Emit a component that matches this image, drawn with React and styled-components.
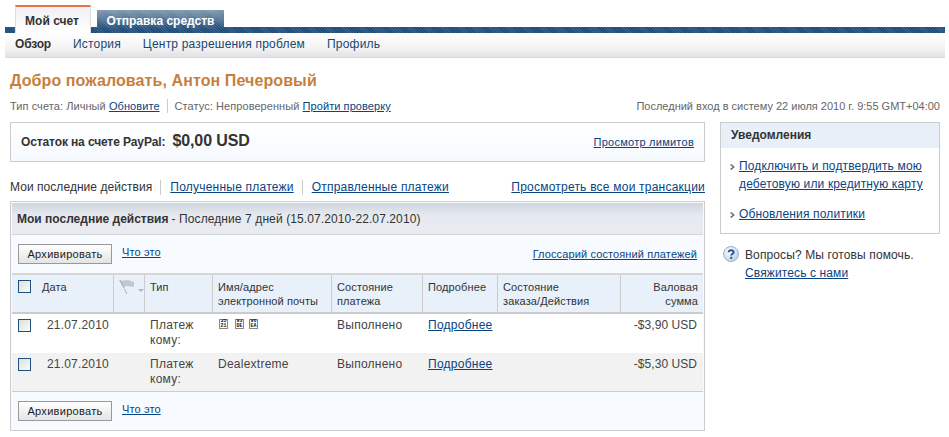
import React from "react";
import styled, { createGlobalStyle } from "styled-components";

const GlobalStyle = createGlobalStyle`
  html, body {
    margin: 0;
    padding: 0;
    background: white;
  }
  body {
    font-family: "Liberation Sans", Arial, sans-serif;
    font-size: 12px;
    color: #333;
  }
`;

const dither =
  "repeating-linear-gradient(45deg, rgba(255,255,255,0.12) 0 1px, transparent 1px 2px)";

const Page = styled.div`
  width: 949px;
  height: 437px;
  overflow: hidden;
  padding: 5px 4px 0 5px;
  box-sizing: border-box;
`;

const TabBar = styled.div`
  height: 28px;
  display: flex;
  align-items: flex-end;
  gap: 6px;
  padding-left: 10px;
  background: ${dither}, linear-gradient(to bottom, white 22px, #1d4a78 22px);
  background-size: 100% 100%, 100% 100%;
  background-position: 0 22px, 0 0;
  background-repeat: no-repeat;
`;

const ActiveTab = styled.div`
  width: 76px;
  height: 28px;
  box-sizing: border-box;
  border-top: 2px solid #e8734a;
  border-left: 1px solid #ddd;
  border-right: 1px solid #ddd;
  background: linear-gradient(to bottom, #f0f0f0, #fff);
  font-weight: 700;
  font-size: 12px;
  color: #333;
  text-align: center;
  padding: 7px 2px 0 0;
`;

const SendTab = styled.div`
  width: 127px;
  height: 23px;
  box-sizing: border-box;
  background: ${dither}, linear-gradient(to bottom, #7f96ae, #1d4a78 85%);
  font-weight: 700;
  font-size: 12px;
  color: white;
  text-align: center;
  line-height: 22px;
`;

const SubNav = styled.div`
  height: 25px;
  display: flex;
  align-items: center;
  gap: 22px;
  padding: 0 0 2px 10px;
  box-sizing: border-box;
  background: linear-gradient(to bottom, #fff, #f4f4f4 60%, #e2e2e6);
  border-bottom: 1px solid #d5dbe8;
`;

const SubNavItem = styled.span`
  font-size: 12px;
  letter-spacing: ${(props) => (props.$active ? "-0.2px" : "0.2px")};
  color: ${(props) => (props.$active ? "#333" : "#1b4571")};
  font-weight: ${(props) => (props.$active ? 700 : 400)};
`;

const Title = styled.h1`
  margin: 13px 0 0 5px;
  font-size: 16px;
  line-height: 20px;
  font-weight: 700;
  letter-spacing: 0.1px;
  color: #c77f3d;
`;

const InfoRow = styled.div`
  display: flex;
  justify-content: space-between;
  align-items: center;
  margin: 8px 5px 0 5px;
  height: 14px;
  font-size: 11px;
  color: #666;
`;

const InfoGroup = styled.div`
  display: flex;
  align-items: center;
  letter-spacing: 0.07px;
`;

const Link = styled.a`
  color: #084482;
  text-decoration: underline;
  cursor: pointer;
`;

const Divider = styled.span`
  width: 1px;
  height: 14px;
  background: #ccc;
  margin: 0 7px;
`;

const Columns = styled.div`
  display: flex;
  gap: 15px;
  margin: 9px 0 0 5px;
  align-items: flex-start;
`;

const LeftColumn = styled.div`
  width: 695px;
`;

const RightColumn = styled.div`
  width: 220px;
`;

const BalanceBox = styled.div`
  height: 40px;
  box-sizing: border-box;
  border: 1px solid #ccc;
  background: linear-gradient(to bottom, #fff, #f5f9fe);
  display: flex;
  align-items: center;
  padding: 0 10px;
`;

const BalanceLabel = styled.span`
  font-weight: 700;
  font-size: 12px;
  letter-spacing: -0.12px;
  color: #333;
`;

const BalanceValue = styled.span`
  font-weight: 700;
  font-size: 16px;
  color: #333;
  letter-spacing: -0.1px;
  margin-left: 7px;
  margin-top: -2px;
  flex: 1;
`;

const SmallLink = styled(Link)`
  font-size: 11px;
  letter-spacing: 0.12px;
`;

const LimitsLink = styled(SmallLink)`
  letter-spacing: 0.25px;
`;

const ActivityTabs = styled.div`
  display: flex;
  align-items: center;
  height: 16px;
  margin-top: 17px;
  font-size: 12px;
  letter-spacing: 0.05px;
  color: #333;

  a {
    letter-spacing: 0.22px;
  }
`;

const ActivityDivider = styled.span`
  width: 1px;
  height: 15px;
  background: #ccc;
  margin: 0 9px 0 8px;
`;

const AllLink = styled(Link)`
  margin-left: auto;
`;

const Panel = styled.div`
  margin-top: 6px;
  height: 230px;
  box-sizing: border-box;
  border: 1px solid #ccc;
  padding: 1px;
  background: #f7fbff;
`;

const PanelHeader = styled.div`
  height: 32px;
  box-sizing: border-box;
  border-bottom: 1px solid #d5d5d5;
  background: linear-gradient(to bottom, #cfd5dc, #e6eaf0 40%, #e8ebf0);
  display: flex;
  align-items: center;
  padding-left: 5px;
  font-size: 12px;
  letter-spacing: 0.1px;
  color: #333;
`;

const Bold = styled.b`
  margin-right: 3px;
  letter-spacing: 0;
`;

const Toolbar = styled.div`
  height: ${(props) => props.$height}px;
  display: flex;
  align-items: flex-start;
  padding: ${(props) => props.$top}px 6px 0 6px;
  box-sizing: border-box;
`;

const ArchiveButton = styled.button`
  width: 94px;
  height: 20px;
  padding: 0;
  border: 1px solid #999;
  background: linear-gradient(to bottom, #fff, #e4e4e4);
  font-family: inherit;
  font-size: 11px;
  letter-spacing: 0.3px;
  color: #222;
`;

const WhatLink = styled(SmallLink)`
  margin: 2px 0 0 10px;
`;

const GlossaryLink = styled(SmallLink)`
  margin: 4px 0 0 auto;
`;

const columns = "25px 77px 31px 68px 119px 91px 75px 123px 82px";

const HeaderRow = styled.div`
  display: grid;
  grid-template-columns: ${columns};
  height: 41px;
  box-sizing: border-box;
  border-top: 2px solid #d5d5d5;
  border-bottom: 2px solid #ccc;
  background: #e8f0fa;
`;

const HeaderCell = styled.div`
  box-sizing: border-box;
  padding: 5px 5px 0 5px;
  font-size: 11px;
  line-height: 14px;
  letter-spacing: 0.12px;
  color: #333;
  text-align: ${(props) => (props.$right ? "right" : "left")};
  border-right: ${(props) => (props.$last ? "none" : "1px solid #ccc")};
`;

const FlagCell = styled(HeaderCell)`
  padding: 5px 0 0 4px;
`;

const DataRow = styled.div`
  display: grid;
  grid-template-columns: ${columns};
  height: 39px;
  background: ${(props) => (props.$alt ? "#f2f2f2" : "#fff")};
  border-bottom: ${(props) => (props.$alt ? "1px solid #ccc" : "none")};
  box-sizing: border-box;
`;

const DataCell = styled.div`
  padding: 4px 6px 0 5px;
  font-size: 12px;
  line-height: 15px;
  letter-spacing: ${(props) => (props.$right ? "0.05px" : "0.25px")};
  color: #444;
  text-align: ${(props) => (props.$right ? "right" : "left")};
`;

const DateCell = styled(DataCell)`
  padding-left: 10px;
  letter-spacing: 0.18px;
`;

const CheckCell = styled.div`
  padding: 5px 0 0 6px;
`;

const CheckBox = styled.span`
  display: block;
  width: 11px;
  height: 11px;
  border: 1px solid #1d4f80;
  background: linear-gradient(135deg, #e0e0d8, #fbfbf8);
`;

const TofuRow = styled.div`
  display: flex;
  padding: 1px 0 0 1px;
`;

const Tofu = styled.span`
  display: block;
  width: 9px;
  height: 10px;
  margin-right: ${(props) => props.$gap}px;
  box-shadow: inset 0 0 0 1px #888;
  font-family: "Liberation Mono", monospace;
  font-size: 5px;
  font-weight: 700;
  line-height: 5px;
  letter-spacing: 0;
  text-align: center;
  color: #111;
  overflow: hidden;
`;

const TofuLine = styled.span`
  display: block;
`;

const NoticeBox = styled.div`
  height: 112px;
  box-sizing: border-box;
  border: 1px solid #ccc;
`;

const NoticeTitle = styled.div`
  height: 25px;
  background: #e8eff8;
  font-weight: 700;
  font-size: 12px;
  line-height: 25px;
  color: #333;
  padding-left: 10px;
`;

const NoticeList = styled.div`
  padding: 9px 0 0 9px;
  display: flex;
  flex-direction: column;
  gap: 12px;
`;

const NoticeItem = styled.div`
  display: flex;
  font-size: 12px;
  line-height: 18px;
  letter-spacing: 0.15px;
`;

const Bullet = styled.svg`
  width: 5px;
  height: 6px;
  margin: 7px 4px 0 0;
  flex: none;
`;

const HelpRow = styled.div`
  display: flex;
  margin: 12px 0 0 3px;
  font-size: 12px;
  line-height: 18px;
  letter-spacing: 0.12px;
  color: #333;
`;

const HelpIcon = styled.svg`
  width: 16px;
  height: 16px;
  margin-right: 6px;
  flex: none;
`;

const FlagIcon = () => (
  <svg width="26" height="16" viewBox="0 0 26 16">
    <path d="M2 1 L10 0 L16 2 L16 7 L9 6 L5 7 Z" fill="#c4c8cb" />
    <path d="M2 0 L9 14" stroke="#8f969b" strokeWidth="1.2" strokeDasharray="1 1" fill="none" />
    <path d="M20 9 L26 9 L23 12 Z" fill="#aeb6bf" />
  </svg>
);

const BulletIcon = () => (
  <Bullet viewBox="0 0 5 6">
    <path d="M0.7 0.5 L3.7 3 L0.7 5.5" fill="none" stroke="#666" strokeWidth="1.5" />
  </Bullet>
);

const TofuGlyph = ({ code, gap }) => (
  <Tofu $gap={gap}>
    <TofuLine>{code.slice(0, 2)}</TofuLine>
    <TofuLine>{code.slice(2)}</TofuLine>
  </Tofu>
);

const Row = ({ alt, amount, name }) => (
  <DataRow $alt={alt}>
    <CheckCell>
      <CheckBox />
    </CheckCell>
    <DateCell>21.07.2010</DateCell>
    <DataCell />
    <DataCell>Платеж кому:</DataCell>
    <DataCell>{name}</DataCell>
    <DataCell>Выполнено</DataCell>
    <DataCell>
      <Link>Подробнее</Link>
    </DataCell>
    <DataCell />
    <DataCell $right>{amount}</DataCell>
  </DataRow>
);

export default function App() {
  return (
    <Page>
      <GlobalStyle />
      <TabBar>
        <ActiveTab>Мой счет</ActiveTab>
        <SendTab>Отправка средств</SendTab>
      </TabBar>
      <SubNav>
        <SubNavItem $active>Обзор</SubNavItem>
        <SubNavItem>История</SubNavItem>
        <SubNavItem>Центр разрешения проблем</SubNavItem>
        <SubNavItem>Профиль</SubNavItem>
      </SubNav>
      <Title>Добро пожаловать, Антон Печеровый</Title>
      <InfoRow>
        <InfoGroup>
          Тип счета: Личный&nbsp;<Link>Обновите</Link>
          <Divider />
          Статус: Непроверенный&nbsp;<Link>Пройти проверку</Link>
        </InfoGroup>
        <span>Последний вход в систему 22 июля 2010 г. 9:55 GMT+04:00</span>
      </InfoRow>
      <Columns>
        <LeftColumn>
          <BalanceBox>
            <BalanceLabel>Остаток на счете PayPal:</BalanceLabel>
            <BalanceValue>$0,00 USD</BalanceValue>
            <LimitsLink>Просмотр лимитов</LimitsLink>
          </BalanceBox>
          <ActivityTabs>
            Мои последние действия
            <ActivityDivider />
            <Link>Полученные платежи</Link>
            <ActivityDivider />
            <Link>Отправленные платежи</Link>
            <AllLink>Просмотреть все мои трансакции</AllLink>
          </ActivityTabs>
          <Panel>
            <PanelHeader>
              <Bold>Мои последние действия</Bold> - Последние 7 дней (15.07.2010-22.07.2010)
            </PanelHeader>
            <Toolbar $height={38} $top={9}>
              <ArchiveButton>Архивировать</ArchiveButton>
              <WhatLink>Что это</WhatLink>
              <GlossaryLink>Глоссарий состояний платежей</GlossaryLink>
            </Toolbar>
            <HeaderRow>
              <CheckCell>
                <CheckBox />
              </CheckCell>
              <HeaderCell>Дата</HeaderCell>
              <FlagCell>
                <FlagIcon />
              </FlagCell>
              <HeaderCell>Тип</HeaderCell>
              <HeaderCell>
                Имя/адрес электронной почты
              </HeaderCell>
              <HeaderCell>
                Состояние платежа
              </HeaderCell>
              <HeaderCell>Подробнее</HeaderCell>
              <HeaderCell>
                Состояние
                <br />
                заказа/Действия
              </HeaderCell>
              <HeaderCell $right $last>
                Валовая сумма
              </HeaderCell>
            </HeaderRow>
            <Row
              amount="-$3,90 USD"
              name={
                <TofuRow>
                  <TofuGlyph code="3521" gap={7} />
                  <TofuGlyph code="93DE" gap={5} />
                  <TofuGlyph code="96EA" gap={0} />
                </TofuRow>
              }
            />
            <Row alt amount="-$5,30 USD" name="Dealextreme" />
            <Toolbar $height={37} $top={9}>
              <ArchiveButton>Архивировать</ArchiveButton>
              <WhatLink>Что это</WhatLink>
            </Toolbar>
          </Panel>
        </LeftColumn>
        <RightColumn>
          <NoticeBox>
            <NoticeTitle>Уведомления</NoticeTitle>
            <NoticeList>
              <NoticeItem>
                <BulletIcon />
                <Link>
                  Подключить и подтвердить мою
                  <br />
                  дебетовую или кредитную карту
                </Link>
              </NoticeItem>
              <NoticeItem>
                <BulletIcon />
                <Link>Обновления политики</Link>
              </NoticeItem>
            </NoticeList>
          </NoticeBox>
          <HelpRow>
            <HelpIcon viewBox="0 0 16 16">
              <defs>
                <radialGradient id="helpFill" cx="0.4" cy="0.35" r="0.7">
                  <stop offset="0" stopColor="#ffffff" />
                  <stop offset="1" stopColor="#b9cde8" />
                </radialGradient>
              </defs>
              <circle cx="8" cy="8" r="7.5" fill="url(#helpFill)" stroke="#9fb4d0" />
              <path
                d="M5.6 6.2 C5.6 3.6 10.6 3.6 10.6 6.2 C10.6 8 8.2 8 8.2 9.6"
                fill="none"
                stroke="#1d4f9a"
                strokeWidth="1.9"
              />
              <rect x="7.2" y="10.8" width="2" height="2" fill="#1d4f9a" />
            </HelpIcon>
            <div>
              Вопросы? Мы готовы помочь.
              <br />
              <Link>Свяжитесь с нами</Link>
            </div>
          </HelpRow>
        </RightColumn>
      </Columns>
    </Page>
  );
}
